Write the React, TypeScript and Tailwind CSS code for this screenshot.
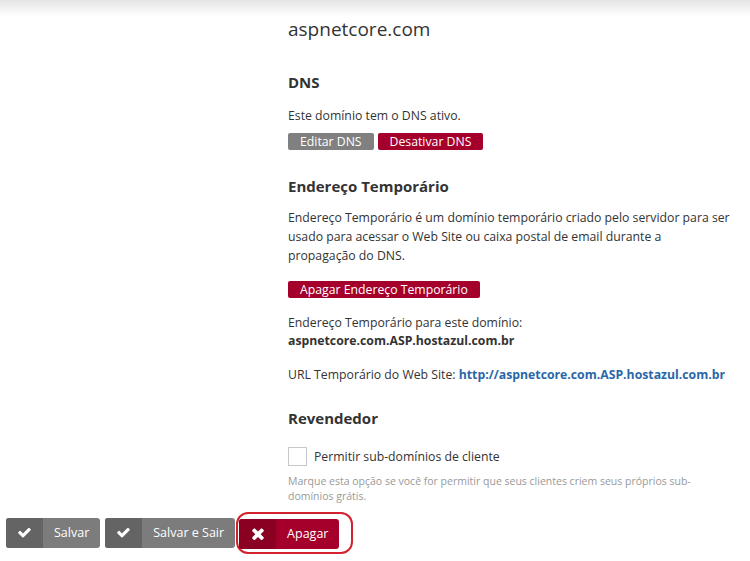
import React from 'react';

const CheckIcon = () => (
  <svg viewBox="110 420 1580 1090" className="w-[13px] h-[10px]" fill="white">
    <path d="M1671 566q0 40-28 68l-724 724-136 136q-28 28-68 28t-68-28l-136-136-362-362q-28-28-28-68t28-68l136-136q28-28 68-28t68 28l294 295 656-657q28-28 68-28t68 28l136 136q28 28 28 68z" />
  </svg>
);

const TimesIcon = () => (
  <svg viewBox="100 330 1210 1210" className="w-[12px] h-[12px]" fill="white">
    <path d="M1298 1322q0 40-28 68l-136 136q-28 28-68 28t-68-28l-294-294-294 294q-28 28-68 28t-68-28l-136-136q-28-28-28-68t28-68l294-294-294-294q-28-28-28-68t28-68l136-136q28-28 68-28t68 28l294 294 294-294q28-28 68-28t68 28l136 136q28 28 28 68t-28 68l-294 294 294 294q28 28 28 68z" />
  </svg>
);

const ActionButton = ({ icon, label, dark, light }: { icon: React.ReactNode; label: string; dark: string; light: string }) => (
  <button className={`flex h-[30px] rounded-[3px] overflow-hidden text-white text-[12.5px] ${light}`}>
    <span className={`w-[37px] h-full flex items-center justify-center ${dark}`}>{icon}</span>
    <span className="px-[11px] h-full flex items-center">{label}</span>
  </button>
);

const App = () => {
  return (
    <div className="min-h-[561px] bg-white text-[#333] font-['Open_Sans',sans-serif] flex flex-col">
      <div className="h-[16px] bg-linear-to-b from-[#e4e4e4] to-white" />

      <div className="pl-[288px] w-[745px] text-[12.25px]">
        <h1 className="text-[19px] leading-[26px]">aspnetcore.com</h1>

        <h2 className="mt-[30px] text-[15px] leading-[20px] font-bold">DNS</h2>
        <p className="mt-[15px] leading-[18px]">Este domínio tem o DNS ativo.</p>
        <div className="mt-[8px] flex gap-[4px]">
          <button className="h-[17px] px-[12px] bg-[#808080] text-white text-[12.25px] leading-[17px] rounded-[2px]">Editar DNS</button>
          <button className="h-[17px] px-[12px] bg-[#a5002c] text-white text-[12.25px] leading-[17px] rounded-[2px]">Desativar DNS</button>
        </div>

        <h2 className="mt-[26px] text-[15px] leading-[20px] font-bold">Endereço Temporário</h2>
        <p className="mt-[12px] leading-[19px]">
          Endereço Temporário é um domínio temporário criado pelo servidor para ser usado para acessar o Web Site ou caixa postal de email durante a
          <br />
          propagação do DNS.
        </p>
        <button className="mt-[16px] h-[17px] px-[12px] bg-[#a5002c] text-white text-[12.25px] leading-[17px] rounded-[2px]">Apagar Endereço Temporário</button>

        <p className="mt-[15px] leading-[18px]">
          Endereço Temporário para este domínio:
          <br />
          <b>aspnetcore.com.ASP.hostazul.com.br</b>
        </p>
        <p className="mt-[16px] leading-[18px]">
          URL Temporário do Web Site:{' '}
          <a href="#" className="font-bold text-[#2a67a8]">http://aspnetcore.com.ASP.hostazul.com.br</a>
        </p>

        <h2 className="mt-[24px] text-[15px] leading-[20px] font-bold">Revendedor</h2>
        <label className="mt-[19px] flex items-center gap-[7px]">
          <span className="w-[19px] h-[19px] border border-[#c8c8c8] bg-white" />
          <span>Permitir sub-domínios de cliente</span>
        </label>
        <p className="mt-[8px] text-[10.5px] leading-[15px] text-[#999]">
          Marque esta opção se você for permitir que seus clientes criem seus próprios sub-
          <br />
          domínios grátis.
        </p>
      </div>

      <div className="mt-[8px] pl-[6px] flex items-center gap-[5px]">
        <ActionButton icon={<CheckIcon />} label="Salvar" dark="bg-[#646464]" light="bg-[#7c7c7c]" />
        <ActionButton icon={<CheckIcon />} label="Salvar e Sair" dark="bg-[#646464]" light="bg-[#7c7c7c]" />
        <div className="-ml-[4px] pl-[1px] pr-[12px] pt-[5px] pb-[3px] border-2 border-[#d3222e] rounded-[12px]">
          <ActionButton icon={<TimesIcon />} label="Apagar" dark="bg-[#8a0022]" light="bg-[#a5002c]" />
        </div>
      </div>
    </div>
  );
};

export default App;
